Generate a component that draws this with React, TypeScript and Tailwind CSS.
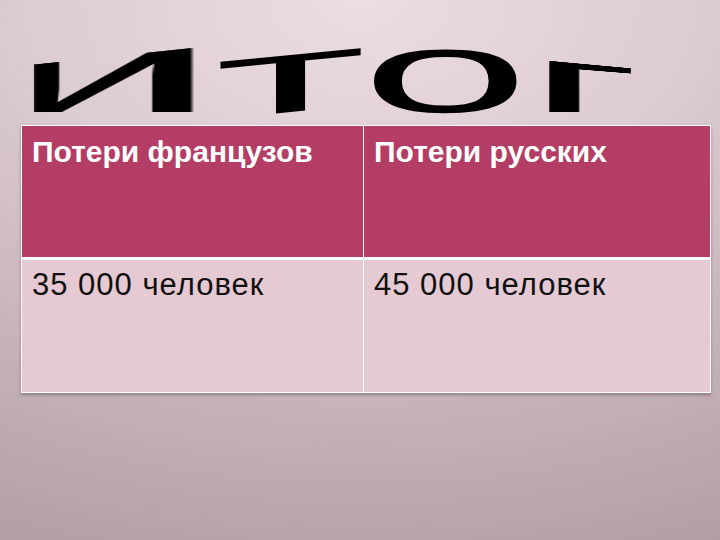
export default function App() {
  const letter =
    "inline-block font-['Liberation_Sans',Arial,sans-serif] text-[116px] leading-[100px] text-black origin-[50%_90.2%]"

  return (
    <div className="h-[540px] w-full overflow-hidden bg-[radial-gradient(ellipse_130%_110%_at_50%_0%,#ecdde2_0%,#ddccd2_35%,#c5b2b8_70%,#b19ea4_100%)]">
      {/* WordArt title */}
      <div className="h-[125px]">
        <div className="flex items-baseline pt-[22px]">
          <div className="flex w-[203px] shrink-0 justify-center">
            <span className={letter + " [transform:perspective(150px)_rotateY(-16deg)_scale(3.3,0.89)]"}>и</span>
          </div>
          <div className="flex w-[175px] shrink-0 justify-center">
            <span className={letter + " [transform:skewY(-5.5deg)_scale(2.85,0.93)]"}>т</span>
          </div>
          <div className="flex w-[134px] shrink-0 justify-center">
            <span className={letter + " [transform:scale(2.6,1)]"}>о</span>
          </div>
          <div className="flex w-[150px] shrink-0 justify-center">
            <span className={letter + " [transform:perspective(150px)_rotateY(16deg)_scale(2.8,0.78)]"}>г</span>
          </div>
        </div>
      </div>

      {/* results table */}
      <div className="ml-[21px] w-[690px] border border-white shadow-[0_2px_3px_rgba(60,30,40,0.35)] font-['Liberation_Sans',Arial,sans-serif] text-[30px]">
        <div className="grid grid-cols-[342px_1fr] bg-[#b43d65] font-bold text-white">
          <div className="h-[131px] border-r border-white px-[10px] pt-[8px] leading-[36px]">Потери французов</div>
          <div className="h-[131px] px-[10px] pt-[8px] leading-[36px]">Потери русских</div>
        </div>
        <div className="h-[3px] bg-white" />
        <div className="grid grid-cols-[342px_1fr] bg-[#e5cad3] text-[31px] text-[#111] tracking-[1px]">
          <div className="h-[132px] border-r border-white px-[10px] pt-[7px] leading-[36px]">35 000 человек</div>
          <div className="h-[132px] px-[10px] pt-[7px] leading-[36px]">45 000 человек</div>
        </div>
      </div>
    </div>
  )
}
